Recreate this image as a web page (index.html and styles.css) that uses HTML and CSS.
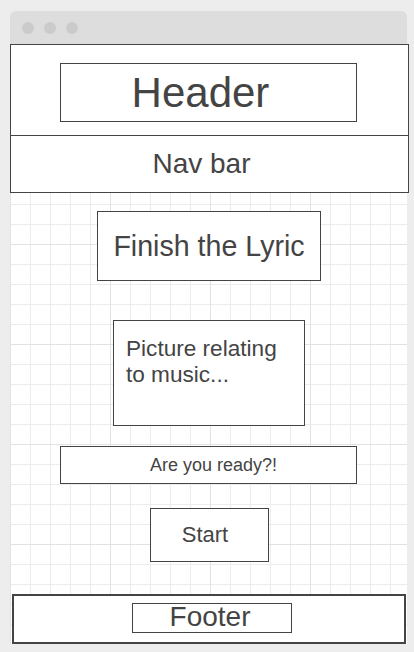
FILE: index.html
```html
<!DOCTYPE html>
<html>
<head>
<meta charset="utf-8">
<link rel="stylesheet" href="styles.css">
</head>
<body>
<div class="window">
  <div class="chrome">
    <span class="dot"></span><span class="dot"></span><span class="dot"></span>
  </div>
  <div class="canvas">
    <header class="header">
      <div class="header-box"><span class="header-text">Header</span></div>
    </header>
    <nav class="nav"><span class="nav-text">Nav bar</span></nav>
    <main class="main">
      <div class="box title-box">Finish the Lyric</div>
      <div class="box picture-box">Picture relating to music...</div>
      <div class="box ready-box"><span class="ready-text">Are you ready?!</span></div>
      <div class="box start-box"><span class="start-text">Start</span></div>
    </main>
    <footer class="footer">
      <div class="footer-box"><span class="footer-text">Footer</span></div>
    </footer>
  </div>
</div>
</body>
</html>
```

FILE: styles.css
```css
* { box-sizing: border-box; }

html, body {
  margin: 0;
  padding: 0;
  background: #ededed;
  font-family: "Liberation Sans", Arial, sans-serif;
  color: #444;
  overflow: hidden;
}

.window {
  margin: 11px 0 0 10px;
  width: 397px;
}

.chrome {
  height: 33px;
  background: #dddddd;
  border-radius: 6px 6px 0 0;
  display: flex;
  align-items: center;
  gap: 10px;
  padding-left: 12px;
}

.dot {
  width: 12px;
  height: 12px;
  border-radius: 50%;
  background: #cbcbcb;
}

.canvas {
  height: 600px;
  display: flex;
  flex-direction: column;
  background-color: #fff;
  background-image:
    linear-gradient(to right, #e2e2e2 1px, transparent 1px),
    linear-gradient(to bottom, #e2e2e2 1px, transparent 1px),
    linear-gradient(to right, #ececec 1px, transparent 1px),
    linear-gradient(to bottom, #ececec 1px, transparent 1px);
  background-size: 100px 100px, 100px 100px, 20px 20px, 20px 20px;
}

.header {
  width: 399px;
  height: 92px;
  margin-right: -2px;
  border: 1px solid #444;
  background: #fff;
  padding: 18px 0 0 49px;
}

.header-box {
  width: 297px;
  height: 59px;
  border: 1px solid #444;
  display: flex;
  align-items: center;
  justify-content: center;
}

.header-text {
  font-size: 42px;
  padding-right: 16px;
}

.nav {
  width: 399px;
  height: 57px;
  border: 1px solid #444;
  border-top: none;
  background: #fff;
  display: flex;
  align-items: center;
  justify-content: center;
  font-size: 28px;
}

.nav-text { padding-right: 16px; }

.main {
  height: 401px;
  display: flex;
  flex-direction: column;
  align-items: flex-start;
  padding-top: 18px;
}

.box {
  border: 1px solid #444;
  background: #fff;
}

.title-box {
  width: 224px;
  height: 70px;
  margin-left: 87px;
  font-size: 28.6px;
  display: flex;
  align-items: center;
  justify-content: center;
}

.picture-box {
  width: 192px;
  height: 106px;
  margin: 39px 0 0 103px;
  padding: 15px 10px 0 12px;
  font-size: 22.6px;
  line-height: 26px;
}

.ready-box {
  width: 297px;
  height: 38px;
  margin: 20px 0 0 50px;
  font-size: 18px;
  display: flex;
  align-items: center;
  justify-content: center;
}

.ready-text { padding-left: 10px; }

.start-box {
  width: 119px;
  height: 54px;
  margin: 24px 0 0 140px;
  font-size: 22px;
  display: flex;
  align-items: center;
  justify-content: center;
}

.start-text { padding-right: 9px; }

.footer {
  width: 394px;
  height: 50px;
  margin-left: 2px;
  border: 2px solid #444;
  background: #fff;
  padding: 7px 0 0 118px;
}

.footer-box {
  width: 160px;
  height: 30px;
  border: 1px solid #444;
  display: flex;
  align-items: center;
  justify-content: center;
  font-size: 28px;
}

.footer-text {
  padding-right: 4px;
  margin-top: -3px;
}
```
